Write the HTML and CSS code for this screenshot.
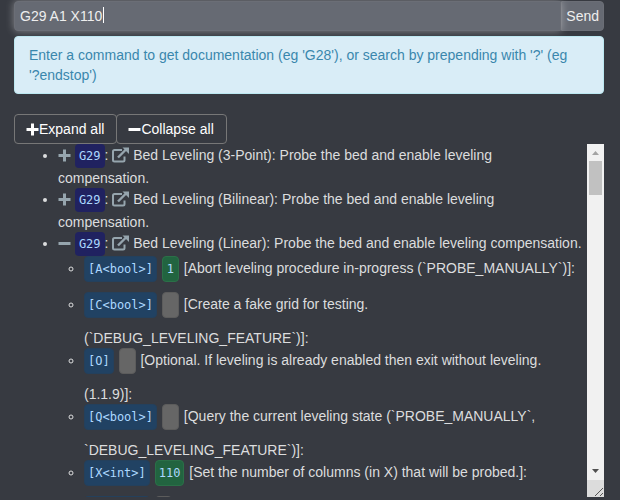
FILE: index.html
```html
<!DOCTYPE html>
<html lang="en">
<head>
<meta charset="utf-8">
<title>Marlin G-code documentation</title>
<link rel="stylesheet" href="styles.css">
</head>
<body>
<svg class="sprite" aria-hidden="true">
  <symbol id="plus" viewBox="0 0 13 13"><path d="M5 0.500h3v4.500h4.500v3H8v4.500H5V8H0.500V5H5z"/></symbol>
  <symbol id="minus" viewBox="0 0 13 13"><path d="M0.500 5h12v3h-12z"/></symbol>
  <symbol id="external" viewBox="0 0 17 16"><path d="M10 3H2.500Q1 3 1 4.500v8.500Q1 14.500 2.500 14.500h8.500Q12.500 14.500 12.500 13V9.500" fill="none" stroke="currentColor" stroke-width="2"/><path d="M6 10.500L14 2.500" fill="none" stroke="currentColor" stroke-width="2.400"/><path d="M10.500 0.500H17V7z"/></symbol>
</svg>
<main class="panel">
  <form class="command">
    <input class="command-input" type="text" value="G29 A1 X110" aria-label="Command" autofocus>
    <button class="send" type="button">Send</button>
    <span class="caret"></span>
  </form>
  <p class="help">Enter a command to get documentation (eg 'G28'), or search by prepending with '?' (eg <span class="example">'?endstop')</span></p>
  <div class="actions">
    <button class="action" type="button"><svg class="icon"><use href="#plus"/></svg>Expand all</button>
    <button class="action" type="button"><svg class="icon"><use href="#minus"/></svg>Collapse all</button>
  </div>
  <section class="docs">
    <ul class="commands">
      <li><svg class="icon muted"><use href="#plus"/></svg> <code class="gcode">G29</code>: <a href="#" aria-label="Open documentation"><svg class="icon link"><use href="#external"/></svg></a> Bed Leveling (3-Point): Probe the bed and enable leveling compensation.</li>
      <li><svg class="icon muted"><use href="#plus"/></svg> <code class="gcode">G29</code>: <a href="#" aria-label="Open documentation"><svg class="icon link"><use href="#external"/></svg></a> Bed Leveling (Bilinear): Probe the bed and enable leveling compensation.</li>
      <li><svg class="icon muted"><use href="#minus"/></svg> <code class="gcode">G29</code>: <a href="#" aria-label="Open documentation"><svg class="icon link"><use href="#external"/></svg></a> Bed Leveling (Linear): Probe the bed and enable leveling compensation.
        <ul class="params">
          <li><code class="param">[A&lt;bool&gt;]</code> <code class="param value">1</code> [Abort leveling procedure in-progress (`PROBE_MANUALLY`)]:</li>
          <li><code class="param">[C&lt;bool&gt;]</code> <code class="param empty">&nbsp;</code> [Create a fake grid for testing. (`DEBUG_LEVELING_FEATURE`)]:</li>
          <li><code class="param">[O]</code> <code class="param empty">&nbsp;</code> [Optional. If leveling is already enabled then exit without leveling. (1.1.9)]:</li>
          <li><code class="param">[Q&lt;bool&gt;]</code> <code class="param empty">&nbsp;</code> [Query the current leveling state (`PROBE_MANUALLY`, `DEBUG_LEVELING_FEATURE`)]:</li>
          <li><code class="param">[X&lt;int&gt;]</code> <code class="param value">110</code> [Set the number of columns (in X) that will be probed.]:</li>
          <li><code class="param">[Y&lt;int&gt;]</code> <code class="param empty">&nbsp;</code></li>
        </ul>
      </li>
    </ul>
    <div class="scrollbar" aria-hidden="true">
      <svg class="arrow up" viewBox="0 0 17 17"><path d="M5 11h7L8.500 7z"/></svg>
      <div class="thumb"></div>
      <svg class="arrow down" viewBox="0 0 17 17"><path d="M5 6h7l-3.500 4z"/></svg>
      <svg class="grip" viewBox="0 0 17 17"><path d="M8 16l8-8M13 16l3-3" stroke="#555"/></svg>
    </div>
  </section>
</main>
</body>
</html>
```
FILE: styles.css
```css
* { box-sizing: border-box; }

body {
  margin: 0;
  background: #373a41;
  color: #dcddde;
  font: 14px/20px "Liberation Sans", Arial, sans-serif;
}

.sprite { position: absolute; width: 0; height: 0; }

.panel {
  display: flex;
  flex-direction: column;
  height: 100vh;
  padding: 1px 16px 3px 14px;
  overflow: hidden;
}

.command { position: relative; display: flex; }

.command-input,
.send {
  height: 30px;
  border: 1px solid #6b6e76;
  border-radius: 4px;
  background: #666a73;
  color: #eeeeee;
  font: inherit;
}

.command-input {
  position: relative;
  z-index: 1;
  flex: 1;
  min-width: 0;
  padding: 0 5px 1px;
  border-radius: 4px 0 0 4px;
  outline: 0;
  caret-color: transparent;
  box-shadow: 0 0 8px rgba(255, 255, 255, 0.4);
}

.send { padding: 0 4px 1px; border-radius: 0 4px 4px 0; }

.caret {
  position: absolute;
  z-index: 2;
  top: 6px;
  left: 89px;
  width: 1px;
  height: 16px;
  background: #ffffff;
}

.help {
  margin: 5px 0 20px;
  padding: 8px 14px;
  border: 1px solid #bce8f1;
  border-radius: 4px;
  background: #d9edf7;
  color: #3a87ad;
}

.example { white-space: nowrap; }

.actions { display: flex; }

.action {
  display: flex;
  align-items: center;
  height: 30px;
  padding: 0 12px 0 11px;
  border: 1px solid #777777;
  border-radius: 4px;
  background: transparent;
  color: #ffffff;
  font: inherit;
}

.action + .action { margin-left: -1px; }

.icon { width: 13px; height: 13px; fill: currentColor; vertical-align: -2px; }
.muted { color: #96a5ae; }
.link { width: 17px; height: 16px; color: #96a5ae; vertical-align: -3px; }

.docs { display: flex; flex: 1; min-height: 0; }

.commands {
  flex: 1;
  min-width: 0;
  margin: 0;
  padding: 0 4px 0 44px;
  overflow: hidden;
}

.params { margin: 0; padding-left: 26px; }

code { display: inline-block; font: 12px/24px "DejaVu Sans Mono", monospace; white-space: nowrap; }

.gcode {
  padding: 0 4px;
  border-radius: 4px;
  background: #202260;
  color: #add8ff;
}

.param {
  min-width: 17px;
  margin: 0 1px 10px 0;
  padding: 0 3px;
  border: 1px solid #24405c;
  border-radius: 4px;
  background: #214263;
  color: #add8ff;
  text-align: center;
}

.value { border-color: #2b7048; background: #226440; }
.empty { border-color: #5c5c5c; background: #666666; }

.scrollbar {
  display: flex;
  flex-direction: column;
  width: 17px;
  background: #f1f1f1;
}

.arrow, .grip { flex: none; width: 17px; height: 17px; }
.up { fill: #a3a3a3; }
.down { margin-top: auto; fill: #505050; }
.thumb { height: 34px; margin: 0 2px; background: #c1c1c1; }
.grip { background: #dcdcdc; }
```
